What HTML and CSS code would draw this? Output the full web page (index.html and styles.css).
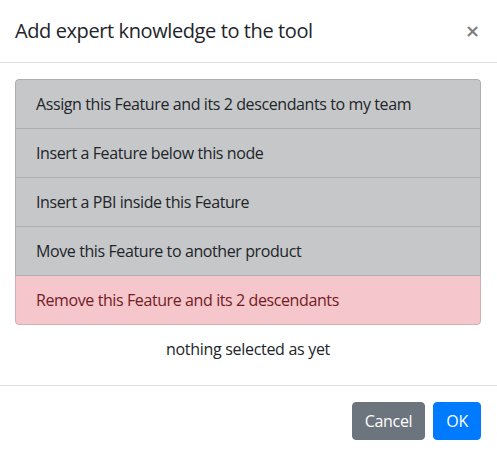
FILE: index.html
```html
<!DOCTYPE html>
<html>
<head>
<meta charset="utf-8">
<link rel="stylesheet" href="styles.css">
</head>
<body>
<div class="modal">
  <div class="modal-header">
    <h5 class="modal-title">Add expert knowledge to the tool</h5>
    <button class="close" type="button">×</button>
  </div>
  <div class="modal-body">
    <div class="list-group">
      <div class="item item-secondary">Assign this Feature and its 2 descendants to my team</div>
      <div class="item item-secondary">Insert a Feature below this node</div>
      <div class="item item-secondary">Insert a PBI inside this Feature</div>
      <div class="item item-secondary">Move this Feature to another product</div>
      <div class="item item-danger">Remove this Feature and its 2 descendants</div>
    </div>
    <p class="status">nothing selected as yet</p>
  </div>
  <div class="modal-footer">
    <button class="btn btn-secondary" type="button">Cancel</button>
    <button class="btn btn-primary" type="button">OK</button>
  </div>
</div>
</body>
</html>
```

FILE: styles.css
```css
html, body {
  margin: 0;
  padding: 0;
  background: #fff;
  overflow: hidden;
}
body {
  font-family: "Open Sans", "Noto Sans", sans-serif;
  font-size: 16px;
  line-height: 24px;
  color: #212529;
}
.modal {
  width: 498px;
  margin-left: -1px;
  background: #fff;
}
.modal-header {
  display: flex;
  align-items: flex-start;
  justify-content: space-between;
  padding: 16px;
  border-bottom: 1px solid #dee2e6;
}
.modal-title {
  margin: 0;
  font-size: 20px;
  font-weight: 400;
  line-height: 30px;
  letter-spacing: -0.4px;
}
.close {
  margin: -16px -16px -16px auto;
  padding: 16px 17px 16px 16px;
  background: transparent;
  border: 0;
  font-family: "DejaVu Sans", sans-serif;
  font-size: 18px;
  font-weight: 700;
  line-height: 30px;
  color: #000;
  opacity: 0.5;
  text-shadow: 0 1px 0 #fff;
  cursor: pointer;
}
.modal-body {
  padding: 16px 16px 0;
}
.list-group {
  display: flex;
  flex-direction: column;
  border-radius: 4px;
  overflow: hidden;
}
.item {
  padding: 12px 20px;
  border: 1px solid rgba(0, 0, 0, 0.125);
  letter-spacing: -0.4px;
}
.item + .item {
  border-top-width: 0;
}
.item:first-child {
  border-top-left-radius: 4px;
  border-top-right-radius: 4px;
}
.item:last-child {
  border-bottom-left-radius: 4px;
  border-bottom-right-radius: 4px;
}
.item-secondary {
  background: #c6c7c9;
  color: #212529;
}
.item-danger {
  background: #f5c6cb;
  color: #721c24;
}
.status {
  margin: 12px 0 0;
  padding-bottom: 24px;
  text-align: center;
  letter-spacing: -0.3px;
}
.modal-footer {
  display: flex;
  justify-content: flex-end;
  align-items: center;
  padding: 12px;
  border-top: 1px solid #dee2e6;
}
.btn {
  margin: 4px;
  padding: 6px 12px;
  border: 1px solid transparent;
  border-radius: 4px;
  font-family: inherit;
  font-size: 16px;
  line-height: 24px;
  color: #fff;
  letter-spacing: -0.3px;
}
.btn-secondary {
  background: #6c757d;
  border-color: #6c757d;
}
.btn-primary {
  background: #007bff;
  border-color: #007bff;
}
```
